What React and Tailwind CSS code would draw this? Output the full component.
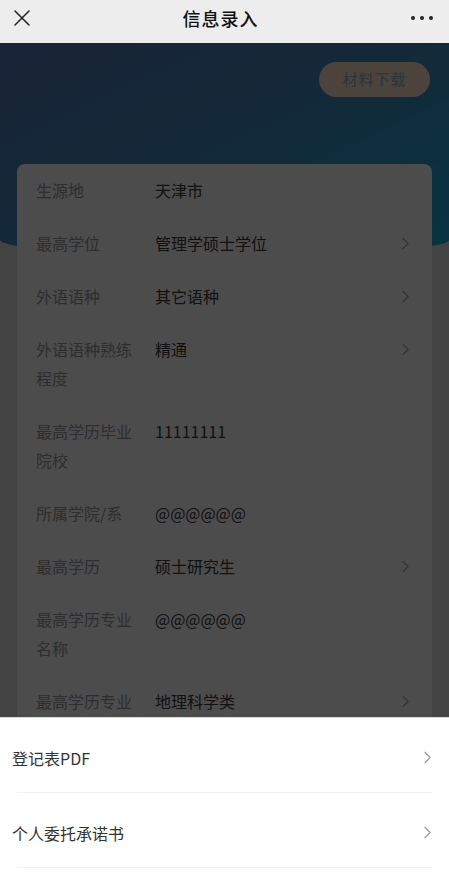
import React from "react";

const rows = [
  { label: "生源地", value: "天津市" },
  { label: "最高学位", value: "管理学硕士学位", arrow: true },
  { label: "外语语种", value: "其它语种", arrow: true },
  { label: "外语语种熟练程度", value: "精通", arrow: true },
  { label: "最高学历毕业院校", value: "11111111" },
  { label: "所属学院/系", value: "@@@@@@" },
  { label: "最高学历", value: "硕士研究生", arrow: true },
  { label: "最高学历专业名称", value: "@@@@@@" },
  { label: "最高学历专业", value: "地理科学类", arrow: true },
];

const files = ["登记表PDF", "个人委托承诺书"];

function Chevron({ className }) {
  return (
    <svg viewBox="0 0 8 14" className={className} fill="none" stroke="currentColor" strokeWidth="1.3" strokeLinecap="round" strokeLinejoin="round">
      <path d="M1 1l6 6-6 6" />
    </svg>
  );
}

export default function App() {
  return (
    <div className="relative h-[873px] w-full overflow-hidden bg-[#e2e2e2] font-['Noto_Sans_CJK_SC',sans-serif]">
      <div className="relative z-20 flex h-[43px] items-center justify-between bg-[#ededed] px-[14px] pb-[7px]">
        <svg viewBox="0 0 16 16" className="h-[16px] w-[16px] text-[#222]" fill="none" stroke="currentColor" strokeWidth="1.5" strokeLinecap="round">
          <path d="M1 1l14 14M15 1L1 15" />
        </svg>
        <div className="text-[18px] font-medium tracking-[1px] text-[#111]">信息录入</div>
        <div className="flex w-[24px] items-center gap-[5px]">
          <span className="h-[4px] w-[4px] rounded-full bg-[#222]" />
          <span className="h-[4px] w-[4px] rounded-full bg-[#222]" />
          <span className="h-[4px] w-[4px] rounded-full bg-[#222]" />
        </div>
      </div>

      <div className="flex h-[213px] items-start justify-end rounded-bl-[50%_16px] rounded-br-[50%_16px] bg-linear-to-br/srgb from-[#5478b8] via-[#3f8cc0] to-[#14b0e0] px-[19px] pt-[19px]">
        <button type="button" className="flex h-[35px] w-[111px] items-center justify-center rounded-full bg-[#ffe0cc] text-[15px] tracking-[1px] text-[#8cb4c0]">
          材料下载
        </button>
      </div>

      <div className="mx-[17px] -mt-[92px] rounded-lg bg-white pl-[19px] pr-[23px]">
        {rows.map((r, i) => (
          <div key={i} className="flex items-start py-3 text-[16px] leading-[29px]">
            <div className="w-[119px] shrink-0 pr-[15px] text-[#999]">{r.label}</div>
            <div className="flex-1 text-[#3a3a3a]">{r.value}</div>
            {r.arrow && (
              <div className="flex h-[29px] items-center">
                <Chevron className="h-[13px] w-[7px] text-[#aaa]" />
              </div>
            )}
          </div>
        ))}
      </div>

      <div className="absolute inset-x-0 top-[43px] bottom-0 z-10 bg-[rgba(0,0,0,0.7)]" />

      <div className="absolute inset-x-0 bottom-0 z-20 h-[156px] border-t border-[#d8d8d8] bg-white">
        {files.map((f) => (
          <div key={f}>
            <div className="flex h-[74px] items-center justify-between pl-[12px] pr-[18px] pt-[5px]">
              <span className="text-[16px] text-[#333]">{f}</span>
              <Chevron className="h-[13px] w-[7px] text-[#999]" />
            </div>
            <div className="mx-[17px] h-px bg-[#f2f2f2]" />
          </div>
        ))}
      </div>
    </div>
  );
}
